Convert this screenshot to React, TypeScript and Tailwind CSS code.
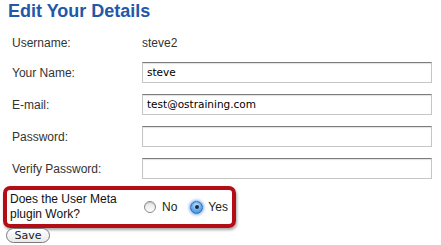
const labelCls = 'w-[130px] shrink-0 text-[12px] text-[#333]';

const TextBox = ({ value = '' }: { value?: string }) => (
  <div className="w-[290px] h-[21px] flex items-center pl-[4px] bg-white border border-[#c6c6c6] border-t-[#7d7d7d] shadow-[inset_0_1px_1px_rgba(0,0,0,0.12)] text-[10.5px] text-black font-['DejaVu_Sans',sans-serif]">
    {value}
  </div>
);

const Radio = ({ checked }: { checked?: boolean }) =>
  checked ? (
    <span className="w-[13px] h-[13px] rounded-full flex items-center justify-center bg-[radial-gradient(circle_at_50%_35%,#d6ecff_0%,#6fb2f0_45%,#2f7fd8_100%)] border border-[#2a66b5] shadow-[0_0_3px_1px_rgba(70,140,230,0.7)]">
      <span className="w-[4px] h-[4px] rounded-full bg-[#1b2a3a]" />
    </span>
  ) : (
    <span className="w-[12px] h-[12px] rounded-full bg-[linear-gradient(#e4e4e4,#ffffff)] border border-[#8a8a8a] shadow-[inset_0_1px_1px_rgba(0,0,0,0.15)]" />
  );

const App = () => {
  return (
    <div className="w-[441px] h-[245px] bg-white overflow-hidden font-['Liberation_Sans',Arial,sans-serif]">
      <h1 className="pl-[8px] text-[18px] leading-[22px] font-bold text-[#2257a9]">Edit Your Details</h1>

      <div className="mt-[11px] pl-[12px] h-[20px] flex items-center">
        <span className={labelCls}>Username:</span>
        <span className="text-[12px] text-[#333]">steve2</span>
      </div>

      <div className="mt-[9px] pl-[12px] flex flex-col gap-[11px]">
        <div className="flex items-center">
          <span className={labelCls}>Your Name:</span>
          <TextBox value="steve" />
        </div>
        <div className="flex items-center">
          <span className={labelCls}>E-mail:</span>
          <TextBox value="test@ostraining.com" />
        </div>
        <div className="flex items-center">
          <span className={labelCls}>Password:</span>
          <TextBox />
        </div>
        <div className="flex items-center">
          <span className={labelCls}>Verify Password:</span>
          <TextBox />
        </div>
      </div>

      <div className="mt-[7px] ml-[3px] w-[233px] h-[42px] border-[4px] border-[#b30d16] rounded-[7px] shadow-[1px_2px_3px_rgba(0,0,0,0.35)] flex items-center pl-[3px]">
        <div className="w-[134px] shrink-0 text-[12px] leading-[15px] text-[#111]">
          Does the User Meta
          <br />
          plugin Work?
        </div>
        <div className="flex items-center text-[12px] text-[#222]">
          <Radio />
          <span className="ml-[6px]">No</span>
          <span className="ml-[13px] flex"><Radio checked /></span>
          <span className="ml-[5px]">Yes</span>
        </div>
      </div>

      <button className="block ml-[6px] w-[44px] h-[15px] rounded-full border border-[#7a7a7a] bg-[linear-gradient(#ffffff,#e9e9e9)] text-[11px] leading-[13px] font-medium text-[#222] font-['DejaVu_Sans',sans-serif]">
        Save
      </button>
    </div>
  );
};

export default App;
